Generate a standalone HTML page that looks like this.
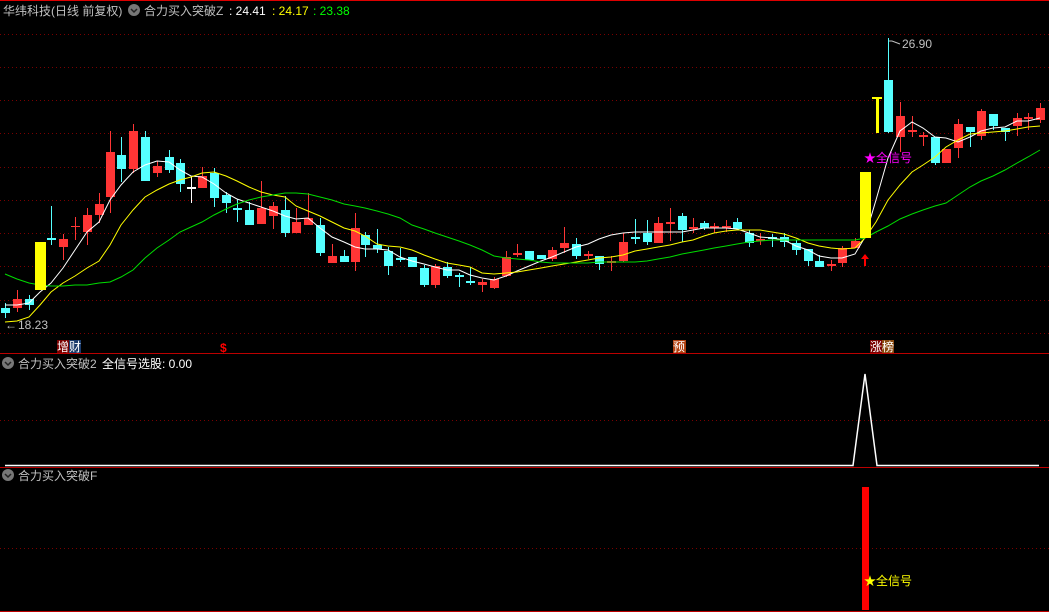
<!DOCTYPE html>
<html><head><meta charset="utf-8">
<style>
html,body{margin:0;padding:0;background:#000;width:1049px;height:612px;overflow:hidden}
svg{display:block}
text{font-family:"Liberation Sans","Noto Sans CJK SC","WenQuanYi Zen Hei",sans-serif;font-size:12px}
</style></head><body>
<svg id="s" width="1049" height="612" viewBox="0 0 1049 612" xmlns="http://www.w3.org/2000/svg">
<rect width="1049" height="612" fill="#000"/>
<line x1="0" y1="0.5" x2="1049" y2="0.5" stroke="#d00" stroke-width="1"/>
<g stroke="#7a0000" stroke-width="1" stroke-dasharray="1 3">
<line x1="0" y1="34.5" x2="1049" y2="34.5"/><line x1="0" y1="67.5" x2="1049" y2="67.5"/>
<line x1="0" y1="100.5" x2="1049" y2="100.5"/><line x1="0" y1="133.5" x2="1049" y2="133.5"/>
<line x1="0" y1="167.5" x2="1049" y2="167.5"/><line x1="0" y1="200.5" x2="1049" y2="200.5"/>
<line x1="0" y1="233.5" x2="1049" y2="233.5"/><line x1="0" y1="266.5" x2="1049" y2="266.5"/>
<line x1="0" y1="300.5" x2="1049" y2="300.5"/><line x1="0" y1="333.5" x2="1049" y2="333.5"/>
<line x1="0" y1="420.5" x2="1049" y2="420.5"/><line x1="0" y1="548.5" x2="1049" y2="548.5"/>
</g>
<line x1="0" y1="353.5" x2="1049" y2="353.5" stroke="#b00" stroke-width="1"/>
<line x1="0" y1="467.5" x2="1049" y2="467.5" stroke="#b00" stroke-width="1"/>
<line x1="0" y1="611.5" x2="1049" y2="611.5" stroke="#b00" stroke-width="1"/>
<g id="cd"></g>
<g fill="none" stroke-width="1">
<polyline id="wl" stroke="#fff"/><polyline id="yl" stroke="#ff0"/><polyline id="gl" stroke="#0d0"/>
</g>
<rect x="35" y="242" width="11" height="48" fill="#ff0"/>
<rect x="860" y="172" width="11" height="66" fill="#ff0"/>
<rect x="876" y="98" width="3" height="35" fill="#ff0"/><rect x="872" y="97" width="10" height="2" fill="#ff0"/>
<path d="M865 254 l-4 5 h3 v7 h2 v-7 h3 z" fill="#f00"/>
<!-- labels -->
<text x="5" y="329" fill="#c0c0c0" font-size="11">←</text>
<text x="18" y="329" fill="#c0c0c0">18.23</text>
<path d="M889 41 h3 l8 3" stroke="#c0c0c0" fill="none"/>
<text x="902" y="48" fill="#c0c0c0">26.90</text>
<text x="864" y="162" fill="#f0f">★全信号</text>
<rect x="57" y="340" width="12" height="13" fill="#7a0000"/><rect x="69" y="340" width="12" height="13" fill="#1a3a6a"/>
<text x="57" y="351" fill="#fff">增财</text>
<text x="220" y="352" fill="#f00" font-size="11" font-weight="bold">$</text>
<rect x="673" y="340" width="13" height="13" fill="#b04010"/>
<text x="673" y="351" fill="#fff">预</text>
<rect x="870" y="340" width="12" height="13" fill="#7a0000"/><rect x="882" y="340" width="12" height="13" fill="#8a4a10"/>
<text x="870" y="351" fill="#fff">涨榜</text>
<!-- headers -->
<text x="3" y="15" fill="#c0c0c0">华纬科技(日线 前复权)</text>
<circle cx="134" cy="10" r="6" fill="#777"/><path d="M131 9 l3 3 l3 -3" stroke="#222" stroke-width="1.5" fill="none"/>
<text x="144" y="15" fill="#c0c0c0">合力买入突破Z</text>
<text x="229" y="15" fill="#fff">: 24.41</text>
<text x="272" y="15" fill="#ff0">: 24.17</text>
<text x="313" y="15" fill="#0f0">: 23.38</text>
<circle cx="8" cy="363" r="6" fill="#777"/><path d="M5 362 l3 3 l3 -3" stroke="#222" stroke-width="1.5" fill="none"/>
<text x="18" y="368" fill="#c0c0c0">合力买入突破2</text>
<text x="102" y="368" fill="#fff">全信号选股: 0.00</text>
<circle cx="8" cy="475" r="6" fill="#777"/><path d="M5 474 l3 3 l3 -3" stroke="#222" stroke-width="1.5" fill="none"/>
<text x="18" y="480" fill="#c0c0c0">合力买入突破F</text>
<!-- panel 2 -->
<polyline points="5,465.5 853,465.5 865,374 877,465.5 1039,465.5" fill="none" stroke="#fff" stroke-width="1.5"/>
<!-- panel 3 -->
<rect x="862" y="487" width="7" height="123" fill="#f00"/>
<text x="864" y="585" fill="#ff0">★全信号</text>
</svg>
<script>
var R="#ff3535",C="#55ffff",W="#ffffff";
// x, wickTop, wickBot, bodyTop, bodyBot, color
var d=[[5,303,318,308,313,C],[17,290,312,299,308,R],[29,295,310,299,305,C],[51,206,245,238,240,C],[63,234,260,239,247,R],[75,217,240,226,227,R],[87,208,245,215,232,R],[99,193,223,204,215,R],[110,131,213,152,197,R],[121,137,182,155,169,C],[133,124,173,131,169,R],[145,131,181,137,181,C],[157,161,177,166,173,R],[169,150,173,157,170,C],[180,159,192,163,184,C],[191,176,203,187,189,W],[202,167,188,176,188,R],[214,168,207,173,198,C],[226,192,213,195,203,C],[237,199,222,208,210,C],[249,202,225,210,225,C],[261,181,224,208,224,R],[273,202,229,206,216,R],[285,196,237,210,233,C],[296,208,233,222,233,R],[308,193,225,218,225,R],[320,218,256,225,253,C],[332,244,263,256,263,R],[344,250,262,256,262,C],[355,213,271,228,262,R],[365,232,257,235,245,C],[377,229,253,245,249,C],[388,247,275,251,266,C],[400,248,262,258,260,C],[412,257,267,257,267,C],[424,265,287,268,285,C],[435,264,288,266,285,R],[447,262,278,267,276,C],[459,273,287,275,277,C],[470,267,285,281,283,C],[482,279,292,282,285,R],[494,277,289,279,288,R],[506,251,277,257,276,R],[517,244,257,253,255,R],[529,251,260,251,260,C],[541,255,259,255,259,C],[552,247,261,250,259,R],[564,227,253,243,248,R],[576,238,259,244,256,C],[588,251,259,254,256,R],[599,256,270,256,264,C],[611,256,271,261,263,R],[623,233,262,242,261,R],[635,219,244,237,239,C],[647,220,245,233,242,C],[658,217,243,223,243,R],[670,208,241,222,224,R],[682,213,242,216,230,C],[693,218,233,227,229,R],[704,221,230,223,228,C],[714,223,233,226,228,R],[726,220,232,226,228,R],[737,218,230,222,229,C],[749,230,247,233,243,C],[760,233,245,239,241,R],[772,234,247,237,239,C],[784,233,247,237,242,C],[796,240,255,243,250,C],[808,249,266,249,261,C],[819,255,267,261,267,C],[831,260,271,264,266,R],[842,246,267,248,263,R],[855,238,248,241,248,R],[888,38,133,80,132,C],[900,102,152,116,137,R],[912,116,137,130,132,R],[923,132,146,135,137,R],[935,137,165,137,163,C],[946,149,163,149,163,R],[958,119,158,124,148,R],[970,127,147,127,132,C],[981,109,140,111,136,R],[993,114,130,114,126,C],[1005,128,141,128,132,C],[1017,113,136,118,126,R],[1028,113,130,117,119,R],[1040,103,123,108,120,R]];
var h="";d.forEach(function(c){var x=c[0];h+='<line x1="'+(x+.5)+'" y1="'+c[1]+'" x2="'+(x+.5)+'" y2="'+c[2]+'" stroke="'+c[5]+'"/>';var bh=Math.max(1,c[4]-c[3]);h+='<rect x="'+(x-4)+'" y="'+c[3]+'" width="9" height="'+bh+'" fill="'+c[5]+'"/>';});
document.getElementById("cd").innerHTML=h;
document.getElementById("wl").setAttribute("points","5,305 17,305 29,303 40,292 51,283 63,268 75,250 87,232 99,222 110,200 121,185 133,172 145,165 157,161 169,162 180,170 191,176 202,177 214,184 226,193 237,199 249,203 261,207 273,211 285,216 296,219 308,218 320,228 332,237 344,242 355,247 365,249 377,249 388,250 400,257 412,261 424,264 435,267 447,270 459,270 470,275 482,278 494,280 506,276 517,271 529,266 541,261 552,257 564,252 576,247 588,244 599,239 611,235 623,233 635,232 647,232 658,232 670,232 682,232 693,230 704,228 714,228 726,228 737,229 749,233 760,237 772,238 784,240 796,246 808,250 819,256 831,258 842,258 855,254 865,237 876,200 888,158 900,131 912,122 923,128 935,137 946,138 958,142 970,137 981,131 993,128 1005,127 1017,121 1028,121 1040,118");
document.getElementById("yl").setAttribute("points","5,322 17,321 29,317 40,305 51,292 63,283 75,276 87,268 99,261 110,245 121,225 133,210 145,197 157,190 169,184 180,180 191,177 202,173 214,172 226,176 237,181 249,187 261,192 273,195 285,197 296,206 308,211 320,216 332,222 344,228 355,231 365,236 377,244 388,246 400,247 412,250 424,255 435,259 447,263 459,265 470,267 482,273 494,274 506,273 517,272 529,270 541,268 552,266 564,264 576,262 588,260 599,258 611,257 623,255 635,251 647,249 658,247 670,245 682,242 693,240 704,236 714,233 726,231 737,230 749,230 760,230 772,232 784,234 796,238 808,243 819,246 831,248 842,249 855,248 865,238 876,222 888,200 900,185 912,172 923,165 935,157 946,147 958,140 970,134 981,133 993,132 1005,131 1017,129 1028,127 1040,126");
document.getElementById("gl").setAttribute("points","5,274 17,279 29,283 40,285 51,286 63,286 75,285 87,285 99,283 110,282 121,277 133,270 145,258 157,248 169,240 180,232 191,227 202,222 214,215 226,209 237,204 249,200 261,197 273,195 285,193 296,193 308,194 320,197 332,200 344,204 355,206 365,208 377,211 388,214 400,218 412,225 424,229 435,233 447,237 459,241 470,245 482,250 494,256 506,258 517,259 529,260 541,262 552,263 564,263 576,263 588,263 599,262 611,262 623,262 635,262 647,261 658,259 670,257 682,254 693,252 704,250 714,248 726,246 737,244 749,242 760,241 772,240 784,240 796,240 808,240 819,240 831,240 842,240 855,240 865,238 876,232 888,226 900,219 912,214 923,210 935,206 946,203 958,195 970,187 981,181 993,176 1005,170 1017,163 1028,157 1040,150");
</script>
</body></html>
